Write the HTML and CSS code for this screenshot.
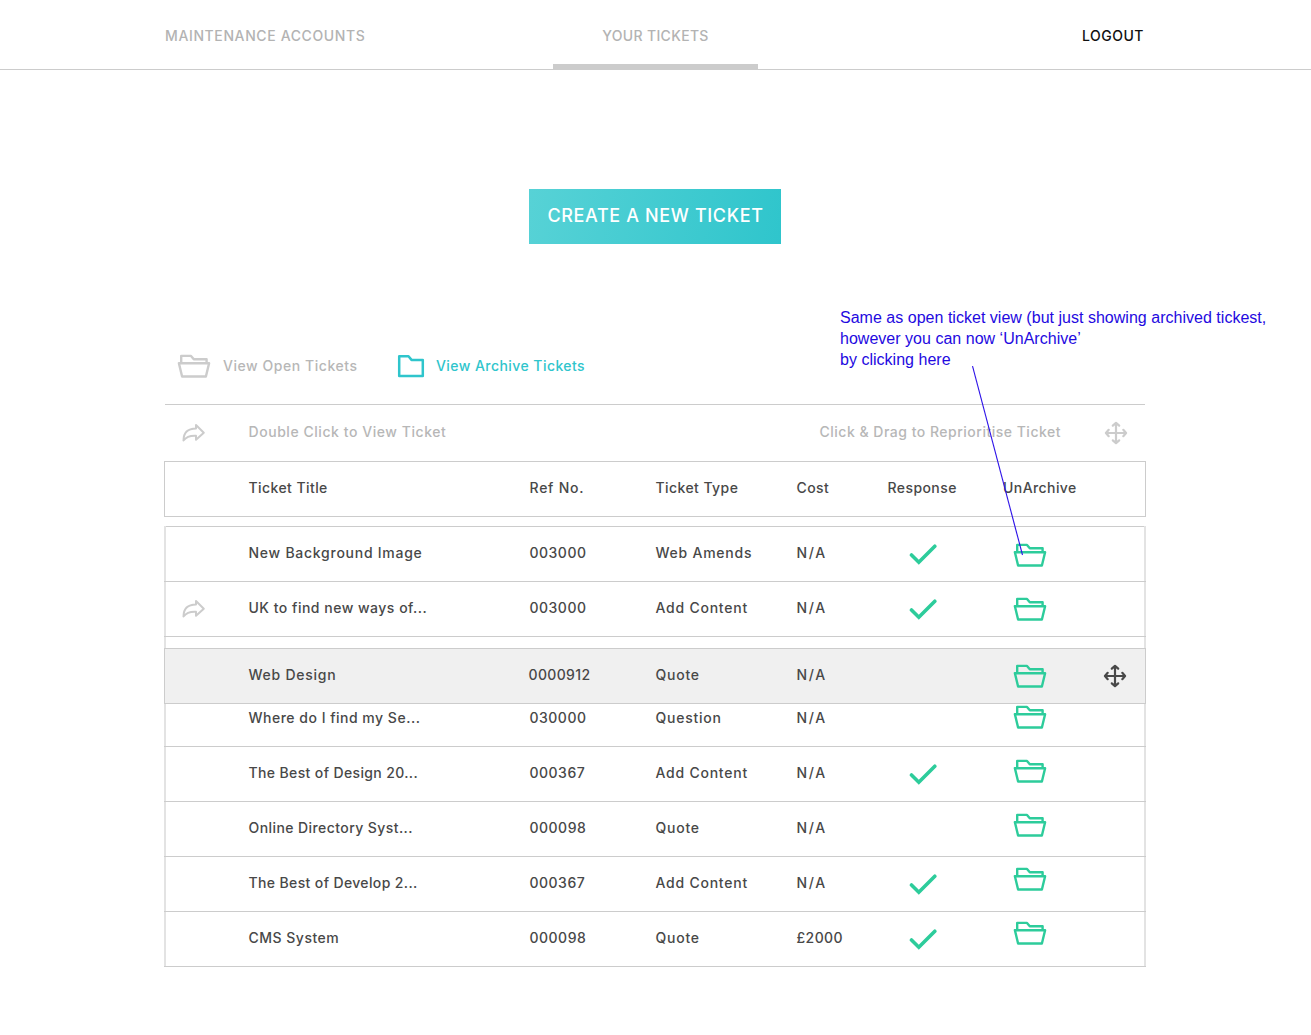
FILE: index.html
```html
<!DOCTYPE html>
<html lang="en">
<head>
<meta charset="utf-8">
<title>Your Tickets</title>
<link rel="stylesheet" href="styles.css">
</head>
<body>
<svg class="defs" width="0" height="0">
  <symbol id="open-folder" viewBox="0 0 34 25"><path d="M4.200 9V1.900h9.800l2.800 3.400h12.800V9M1.900 9.200h30.200l-3.200 13.300H5.100z"/></symbol>
  <symbol id="folder" viewBox="0 0 28 24"><path d="M2.200 2.200h9.300l3 3.700h11.300v16H2.200z"/></symbol>
  <symbol id="share" viewBox="0 0 24 20"><path d="M1.500 17.500C1.500 9.500 6 5.600 14 5.500V2l7.800 7.700-7.800 7.100v-4C8.500 12.500 4.500 13.500 1.500 17.500z"/></symbol>
  <symbol id="move" viewBox="0 0 24 24"><path d="M12 2v20M2 12h20M8.800 4.700 12 1.900l3.200 2.800M8.800 19.300l3.200 2.800 3.200-2.800M4.700 8.800 1.900 12l2.800 3.200M19.300 8.800l2.800 3.200-2.800 3.200"/></symbol>
  <symbol id="check" viewBox="0 0 28 22"><path d="M2.500 12 9.800 19.200 25.800 3.200"/></symbol>
</svg>

<nav class="nav">
  <a class="nav-accounts">MAINTENANCE ACCOUNTS</a>
  <a class="nav-tickets">YOUR TICKETS</a>
  <a class="nav-logout">LOGOUT</a>
</nav>

<main class="page">
  <button class="create">CREATE A NEW TICKET</button>

  <div class="views">
    <a class="view view-open"><svg class="icon folder-open"><use href="#open-folder"/></svg><span>View Open Tickets</span></a>
    <a class="view view-archive"><svg class="icon folder-closed"><use href="#folder"/></svg><span>View Archive Tickets</span></a>
  </div>

  <div class="hints">
    <svg class="icon share"><use href="#share"/></svg>
    <span class="hint-view">Double Click to View Ticket</span>
    <span class="hint-drag">Click &amp; Drag to Reprioritise Ticket</span>
    <svg class="icon move"><use href="#move"/></svg>
  </div>

  <div class="row head">
    <span></span><span>Ticket Title</span><span class="type">Ref No.</span><span>Ticket Type</span><span>Cost</span><span>Response</span><span>UnArchive</span><span></span>
  </div>

  <section class="tickets">
    <div class="row">
      <span></span><span class="loose">New Background Image</span><span class="ref">003000</span><span class="type">Web Amends</span><span class="na">N/A</span>
      <svg class="icon check"><use href="#check"/></svg><svg class="icon folder-open lift-0"><use href="#open-folder"/></svg>
    </div>
    <div class="row">
      <svg class="icon share"><use href="#share"/></svg><span class="ref">UK to find new ways of...</span><span class="ref">003000</span><span class="type">Add Content</span><span class="na">N/A</span>
      <svg class="icon check"><use href="#check"/></svg><svg class="icon folder-open lift-1"><use href="#open-folder"/></svg>
    </div>
    <div class="row dragging">
      <span></span><span class="loose">Web Design</span><span class="long-ref">0000912</span><span class="type">Quote</span><span class="na">N/A</span>
      <span></span><svg class="icon folder-open lift-1"><use href="#open-folder"/></svg><svg class="icon move"><use href="#move"/></svg>
    </div>
    <div class="row tucked">
      <span></span><span class="ref">Where do I find my Se...</span><span class="ref">030000</span><span class="type">Question</span><span class="na">N/A</span>
      <span></span><svg class="icon folder-open lift-2"><use href="#open-folder"/></svg>
    </div>
    <div class="row">
      <span></span><span class="tight">The Best of Design 20...</span><span class="ref">000367</span><span class="type">Add Content</span><span class="na">N/A</span>
      <svg class="icon check"><use href="#check"/></svg><svg class="icon folder-open lift-3"><use href="#open-folder"/></svg>
    </div>
    <div class="row">
      <span></span><span>Online Directory Syst...</span><span class="ref">000098</span><span class="type">Quote</span><span class="na">N/A</span>
      <span></span><svg class="icon folder-open lift-4"><use href="#open-folder"/></svg>
    </div>
    <div class="row">
      <span></span><span class="tight">The Best of Develop 2...</span><span class="ref">000367</span><span class="type">Add Content</span><span class="na">N/A</span>
      <svg class="icon check"><use href="#check"/></svg><svg class="icon folder-open lift-5"><use href="#open-folder"/></svg>
    </div>
    <div class="row">
      <span></span><span class="ref">CMS System</span><span class="ref">000098</span><span class="type">Quote</span><span>£2000</span>
      <svg class="icon check"><use href="#check"/></svg><svg class="icon folder-open lift-6"><use href="#open-folder"/></svg>
    </div>
  </section>
</main>

<p class="note">Same as open ticket view (but just showing archived tickest,<br>however you can now ‘UnArchive’<br>by clicking here</p>
<svg class="pointer" viewBox="0 0 52 190"><path d="M.5 0 50.500 189"/></svg>
</body>
</html>
```

FILE: styles.css
```css
* { box-sizing: border-box; }
body {
  margin: 0;
  position: relative;
  height: 1035px;
  overflow: hidden;
  background: #fff;
  color: #484848;
  font: 500 14px/20px Inter, "Open Sans", sans-serif;
  letter-spacing: .42px;
  white-space: nowrap;
}
.defs { position: absolute; }
.icon {
  display: block;
  fill: none;
  stroke: currentColor;
  stroke-width: 2.4;
  stroke-linejoin: round;
}
.folder-open { width: 34px; height: 25px; color: #2dcc9b; }
.folder-closed { width: 28px; height: 24px; stroke-width: 2.5; }
.share { width: 24px; height: 20px; margin-left: 17px; color: #ccc; stroke-width: 2; }
.move { width: 24px; height: 24px; stroke-width: 2.2; stroke-linecap: round; }
.check { width: 28px; height: 22px; margin-left: 21.5px; color: #2dcc9b; stroke-width: 3.6; stroke-linecap: round; stroke-linejoin: miter; }

.nav {
  display: grid;
  grid-template-columns: 553px 205px 1fr;
  height: 70px;
  border-bottom: 1px solid #ccc;
  color: #b3b3b3;
  font-size: 14px;
}
.nav a { padding-top: 26px; }
.nav-accounts { padding-left: 165px; letter-spacing: .62px; }
.nav-tickets { border-bottom: 5px solid #ccc; text-align: center; letter-spacing: .32px; }
.nav .nav-logout { padding-right: 167px; text-align: right; color: #111; letter-spacing: .5px; }

.page { width: 981px; margin-left: 164px; }
.create {
  display: block;
  width: 252px;
  height: 55px;
  margin: 119px 0 0 365px;
  padding: 0 0 1px 1px;
  border: 0;
  background: linear-gradient(100deg, #57d2d6, #2fc5cc);
  color: #fff;
  font: 500 18px/24px Inter, sans-serif;
  letter-spacing: .64px;
}
.views { display: flex; height: 161px; margin-left: 1px; padding: 109px 0 0 12px; color: #b7b7b7; border-bottom: 1px solid #ccc; }
.view { display: flex; height: 26px; align-items: center; }
.view-open { width: 220px; gap: 12px; letter-spacing: .55px; }
.view .folder-open { color: #ccc; }
.view-archive { gap: 11px; color: #2fc5cc; letter-spacing: .44px; }
.hints { display: grid; grid-template-columns: 84.500px 571px 284.500px 1fr; height: 56px; align-items: center; color: #b7b7b7; letter-spacing: .55px; }
.hints span { padding-bottom: 2px; }
.hint-drag { letter-spacing: .5px; }
.hints .share { margin-left: 18px; }
.hints .move { color: #ccc; margin-left: -.5px; }

.row {
  display: grid;
  grid-template-columns: 82.500px 281px 126px 141px 91px 115.500px 102px 1fr;
  height: 55px;
  align-items: center;
  border-bottom: 1px solid #ccc;
}
.row > span { padding-bottom: 3px; }
.row .share { margin-left: 16px; }
.row > .folder-open { align-self: start; margin-left: 10px; }
.row > .loose { letter-spacing: .74px; }
.row > .tight { letter-spacing: .37px; }
.row > .ref { letter-spacing: .5px; }
.row > .long-ref { margin-left: -1px; letter-spacing: .35px; }
.row > .type { letter-spacing: .76px; }
.row > .na { letter-spacing: 1.7px; }
.head { height: 56px; margin-bottom: 9px; border: 1px solid #ccc; padding-left: 1px; width: 982px; }
.tickets { width: 982px; border: solid #e3e3e3; border-width: 0 2px; box-shadow: inset 0 1px #ccc; padding-top: 1px; }
.tickets .row { margin: 0 -2px; padding: 0 2px; }
.tickets .dragging {
  height: 56px;
  margin-top: 11px;
  border: 1px solid #ccc;
  padding: 0 1px;
  background: #f0f0f0;
}
.dragging .move { margin-left: -2px; }
.tickets .tucked { height: 43px; align-items: start; padding-top: 4px; }
.lift-0 { margin-top: 16px; }
.lift-1 { margin-top: 15px; }
.lift-2 { margin-top: -3px; }
.lift-3 { margin-top: 12px; }
.lift-4 { margin-top: 11px; }
.lift-5 { margin-top: 10px; }
.lift-6 { margin-top: 9px; }

.note {
  position: absolute;
  left: 840px;
  top: 306.600px;
  margin: 0;
  color: #2309df;
  font: 400 16px/21.400px "Liberation Sans", Arial, sans-serif;
  letter-spacing: .02px;
}
.pointer { position: absolute; left: 972px; top: 366px; width: 52px; height: 190px; fill: none; stroke: #2d12e8; stroke-width: 1.1; }
```
